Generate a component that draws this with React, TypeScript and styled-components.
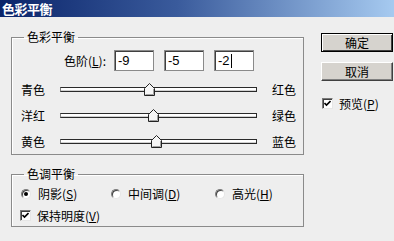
import React from "react";
import styled, { createGlobalStyle } from "styled-components";

const Global = createGlobalStyle`
  html, body { margin: 0; padding: 0; background: #eeeeee; }
  * { box-sizing: border-box; }
`;

const FONT = `"Noto Sans CJK SC", "Liberation Sans", sans-serif`;

const Window = styled.div`
  width: 394px;
  height: 241px;
  overflow: hidden;
  background: #eeeeee;
  font-family: ${FONT};
  font-size: 12px;
  color: #000;
  display: flex;
  flex-direction: column;
`;

const TitleBar = styled.div`
  height: 17px;
  flex: none;
  padding-left: 2px;
  background: linear-gradient(to right, #0a246a 0%, #3a5b9c 45%, #a6caf0 100%);
  color: #fff;
  font-weight: bold;
  font-size: 13px;
  line-height: 17px;
  letter-spacing: -0.5px;
`;

const Content = styled.div`
  display: flex;
  padding-left: 11px;
  gap: 17px;
`;

const LeftCol = styled.div`
  width: 293px;
  display: flex;
  flex-direction: column;
`;

const Group = styled.fieldset<{ $top: number; $pb: number }>`
  margin: ${(p) => p.$top}px 0 0 0;
  padding: 0 0 ${(p) => p.$pb}px 0;
  min-width: 0;
  border: 1px solid #8a8a8a;
  box-shadow: inset 1px 1px 0 #ffffff;
`;

const Legend = styled.legend`
  margin-left: 12px;
  padding: 0 3px;
  font-size: 12px;
  line-height: 14px;
`;

const LevelsRow = styled.div`
  display: flex;
  align-items: center;
  margin-top: 6px;
  height: 21px;
  padding-left: 48px;
`;

const LevelsLabel = styled.span`
  width: 46px;
  text-align: right;
  margin-right: 8px;
  white-space: nowrap;
`;

const Field = styled.div<{ $gap: number }>`
  width: 40px;
  height: 21px;
  margin-left: ${(p) => p.$gap}px;
  background: #fff;
  border: 1px solid #8a8a8a;
  box-shadow: inset 1px 1px 0 #404040;
  padding-left: 3px;
  display: flex;
  align-items: center;
  font-family: "Liberation Sans", sans-serif;
  font-size: 13px;
`;

const Caret = styled.span`
  display: inline-block;
  width: 1px;
  height: 14px;
  background: #000;
  margin-left: 1px;
`;

const SliderRows = styled.div`
  margin-top: 5px;
  display: flex;
  flex-direction: column;
`;

const SliderRow = styled.div`
  height: 26px;
  display: flex;
  align-items: center;
  padding-left: 9px;
`;

const SideLabel = styled.span<{ $w: number }>`
  width: ${(p) => p.$w}px;
  white-space: nowrap;
`;

const Track = styled.div`
  position: relative;
  width: 197px;
  height: 5px;
  margin-right: 15px;
  background: #fff;
  border: 1px solid #2a2a2a;
  border-left-color: #808080;
  box-shadow: inset 0 -1px 0 #d0d0d0;
`;

const Thumb = styled.svg`
  position: absolute;
  top: -5px;
  width: 11px;
  height: 13px;
  margin-left: -6px;
`;

const RadioRow = styled.div`
  margin-top: 4px;
  height: 16px;
  display: grid;
  grid-template-columns: 90px 104px auto;
  padding-left: 9px;
  align-items: center;
`;

const Choice = styled.label`
  display: flex;
  align-items: center;
  gap: 7px;
  white-space: nowrap;
`;

const RadioDot = styled.span<{ $on: boolean }>`
  position: relative;
  width: 10px;
  height: 10px;
  border-radius: 50%;
  background: #fff;
  border: 1px solid;
  border-color: #7a7a7a #e6e6e6 #e6e6e6 #7a7a7a;
  box-shadow: inset 1px 1px 0 #404040;
  &::after {
    content: "";
    display: ${(p) => (p.$on ? "block" : "none")};
    position: absolute;
    left: 2px;
    top: 2px;
    width: 4px;
    height: 4px;
    border-radius: 50%;
    background: #000;
  }
`;

const CheckRow = styled.div<{ $top: number; $pl: number; $gap: number }>`
  margin-top: ${(p) => p.$top}px;
  height: 16px;
  display: flex;
  align-items: center;
  padding-left: ${(p) => p.$pl}px;
  gap: ${(p) => p.$gap}px;
  white-space: nowrap;
`;

const Box = styled.span`
  width: 11px;
  height: 11px;
  background: #fff;
  border: 1px solid;
  border-color: #7a7a7a #e6e6e6 #e6e6e6 #7a7a7a;
  box-shadow: inset 1px 1px 0 #404040;
  display: flex;
  align-items: center;
  justify-content: center;
`;

const RightCol = styled.div`
  display: flex;
  flex-direction: column;
  padding-top: 16px;
`;

const Button = styled.div<{ $default?: boolean }>`
  width: 72px;
  height: 19px;
  margin-bottom: 10px;
  background: #d6d3ce;
  display: flex;
  align-items: center;
  justify-content: center;
  font-size: 12px;
  border: 1px solid;
  border-color: ${(p) => (p.$default ? "#000" : "#fff #404040 #404040 #fff")};
  box-shadow: ${(p) =>
    p.$default
      ? "inset 1px 1px 0 #fff, inset -1px -1px 0 #404040"
      : "inset -1px -1px 0 #808080"};
`;

const U = styled.u`
  text-underline-offset: 1px;
`;

const CheckMark = () => (
  <svg width="7" height="7" viewBox="0 0 7 7">
    <path d="M0.5 3 L2.5 5 L6.5 1" fill="none" stroke="#000" strokeWidth="1.6" />
  </svg>
);

const ThumbShape: React.FC<{ left: number }> = ({ left }) => (
  <Thumb viewBox="0 0 11 13" style={{ left }}>
    <path d="M0.5 5.5 L5.5 0.5 L10.5 5.5 V12.5 H0.5 Z" fill="#f6f6f6" stroke="#222" strokeWidth="1" />
    <path d="M9.5 6 V11.5 H1.5" fill="none" stroke="#a0a0a0" strokeWidth="1" />
  </Thumb>
);

const sliders = [
  { l: "青色", r: "红色", v: -9 },
  { l: "洋红", r: "绿色", v: -5 },
  { l: "黄色", r: "蓝色", v: -2 },
];

const TRACK = 197;

export default function App() {
  return (
    <Window>
      <Global />
      <TitleBar>色彩平衡</TitleBar>
      <Content>
        <LeftCol>
          <Group $top={13} $pb={0}>
            <Legend>色彩平衡</Legend>
            <LevelsRow>
              <LevelsLabel>
                色阶(<U>L</U>):
              </LevelsLabel>
              <Field $gap={0}>-9</Field>
              <Field $gap={10}>-5</Field>
              <Field $gap={10}>
                -2
                <Caret />
              </Field>
            </LevelsRow>
            <SliderRows>
              {sliders.map((s) => (
                <SliderRow key={s.l}>
                  <SideLabel $w={39}>{s.l}</SideLabel>
                  <Track>
                    <ThumbShape left={((s.v + 100) / 200) * (TRACK - 2)} />
                  </Track>
                  <SideLabel $w={30}>{s.r}</SideLabel>
                </SliderRow>
              ))}
            </SliderRows>
          </Group>
          <Group $top={12} $pb={3}>
            <Legend>色调平衡</Legend>
            <RadioRow>
              <Choice>
                <RadioDot $on />
                <span>
                  阴影(<U>S</U>)
                </span>
              </Choice>
              <Choice>
                <RadioDot $on={false} />
                <span>
                  中间调(<U>D</U>)
                </span>
              </Choice>
              <Choice>
                <RadioDot $on={false} />
                <span>
                  高光(<U>H</U>)
                </span>
              </Choice>
            </RadioRow>
            <CheckRow $top={6} $pl={8} $gap={6}>
              <Box>
                <CheckMark />
              </Box>
              <span>
                保持明度(<U>V</U>)
              </span>
            </CheckRow>
          </Group>
        </LeftCol>
        <RightCol>
          <Button $default>确定</Button>
          <Button>取消</Button>
          <CheckRow $top={4} $pl={1} $gap={6}>
            <Box>
              <CheckMark />
            </Box>
            <span>
              预览(<U>P</U>)
            </span>
          </CheckRow>
        </RightCol>
      </Content>
    </Window>
  );
}
